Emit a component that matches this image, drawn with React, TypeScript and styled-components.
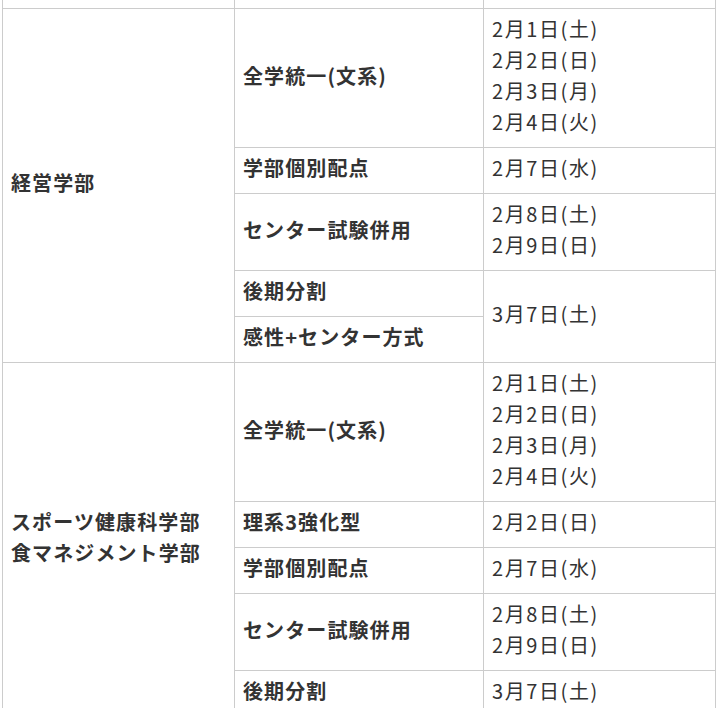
import * as React from 'react';
import styled, { createGlobalStyle } from 'styled-components';

const GlobalStyle = createGlobalStyle`
    html, body {
        margin: 0;
        padding: 0;
        background: #ffffff;
        overflow: hidden;
    }
    body {
        font-family: "Noto Sans CJK JP", "Noto Sans", sans-serif;
        color: #333333;
    }
`;

const Page = styled.div`
    padding-left: 2px;
`;

const Table = styled.table`
    border-collapse: collapse;
    table-layout: fixed;
    width: 713px;
    font-size: 20px;
    line-height: 31px;
`;

const Col = styled.col<{ $w: number }>`
    width: ${(p) => p.$w}px;
`;

// top sliver of the previous row, scrolled off above the view
const SpacerCell = styled.td`
    border: 1px solid #cccccc;
    border-top: 0;
    padding: 0;
    height: 8px;
    line-height: 0;
`;

const Cell = styled.td<{ $bold?: boolean; $date?: boolean }>`
    border: 1px solid #cccccc;
    padding: 4px 8px 10px;
    vertical-align: middle;
    font-weight: ${(p) => (p.$bold ? 700 : 400)};
    letter-spacing: ${(p) => (p.$date ? '1.6px' : '1.1px')};
    white-space: nowrap;
`;

interface IRow {
    course: string;
    dates?: string[];
    dateSpan?: number;
}

interface IGroup {
    faculty: string[];
    rows: IRow[];
}

const groups: IGroup[] = [
    {
        faculty: ['経営学部'],
        rows: [
            { course: '全学統一(文系)', dates: ['2月1日(土)', '2月2日(日)', '2月3日(月)', '2月4日(火)'] },
            { course: '学部個別配点', dates: ['2月7日(水)'] },
            { course: 'センター試験併用', dates: ['2月8日(土)', '2月9日(日)'] },
            { course: '後期分割', dates: ['3月7日(土)'], dateSpan: 2 },
            { course: '感性+センター方式' }
        ]
    },
    {
        faculty: ['スポーツ健康科学部', '食マネジメント学部'],
        rows: [
            { course: '全学統一(文系)', dates: ['2月1日(土)', '2月2日(日)', '2月3日(月)', '2月4日(火)'] },
            { course: '理系3強化型', dates: ['2月2日(日)'] },
            { course: '学部個別配点', dates: ['2月7日(水)'] },
            { course: 'センター試験併用', dates: ['2月8日(土)', '2月9日(日)'] },
            { course: '後期分割', dates: ['3月7日(土)'] }
        ]
    }
];

const Lines = ({ items }: { items: string[] }) => (
    <>
        {items.map((t, i) => (
            <React.Fragment key={i}>
                {i > 0 && <br />}
                {t}
            </React.Fragment>
        ))}
    </>
);

export default function App() {
    return (
        <Page>
            <GlobalStyle />
            <Table>
                <colgroup>
                    <Col $w={232} />
                    <Col $w={249} />
                    <Col $w={232} />
                </colgroup>
                <tbody>
                    <tr>
                        <SpacerCell />
                        <SpacerCell />
                        <SpacerCell />
                    </tr>
                    {groups.map((g, gi) =>
                        g.rows.map((r, ri) => (
                            <tr key={`${gi}-${ri}`}>
                                {ri === 0 && (
                                    <Cell $bold rowSpan={g.rows.length}>
                                        <Lines items={g.faculty} />
                                    </Cell>
                                )}
                                <Cell $bold>{r.course}</Cell>
                                {r.dates && (
                                    <Cell $date rowSpan={r.dateSpan || 1}>
                                        <Lines items={r.dates} />
                                    </Cell>
                                )}
                            </tr>
                        ))
                    )}
                </tbody>
            </Table>
        </Page>
    );
}
